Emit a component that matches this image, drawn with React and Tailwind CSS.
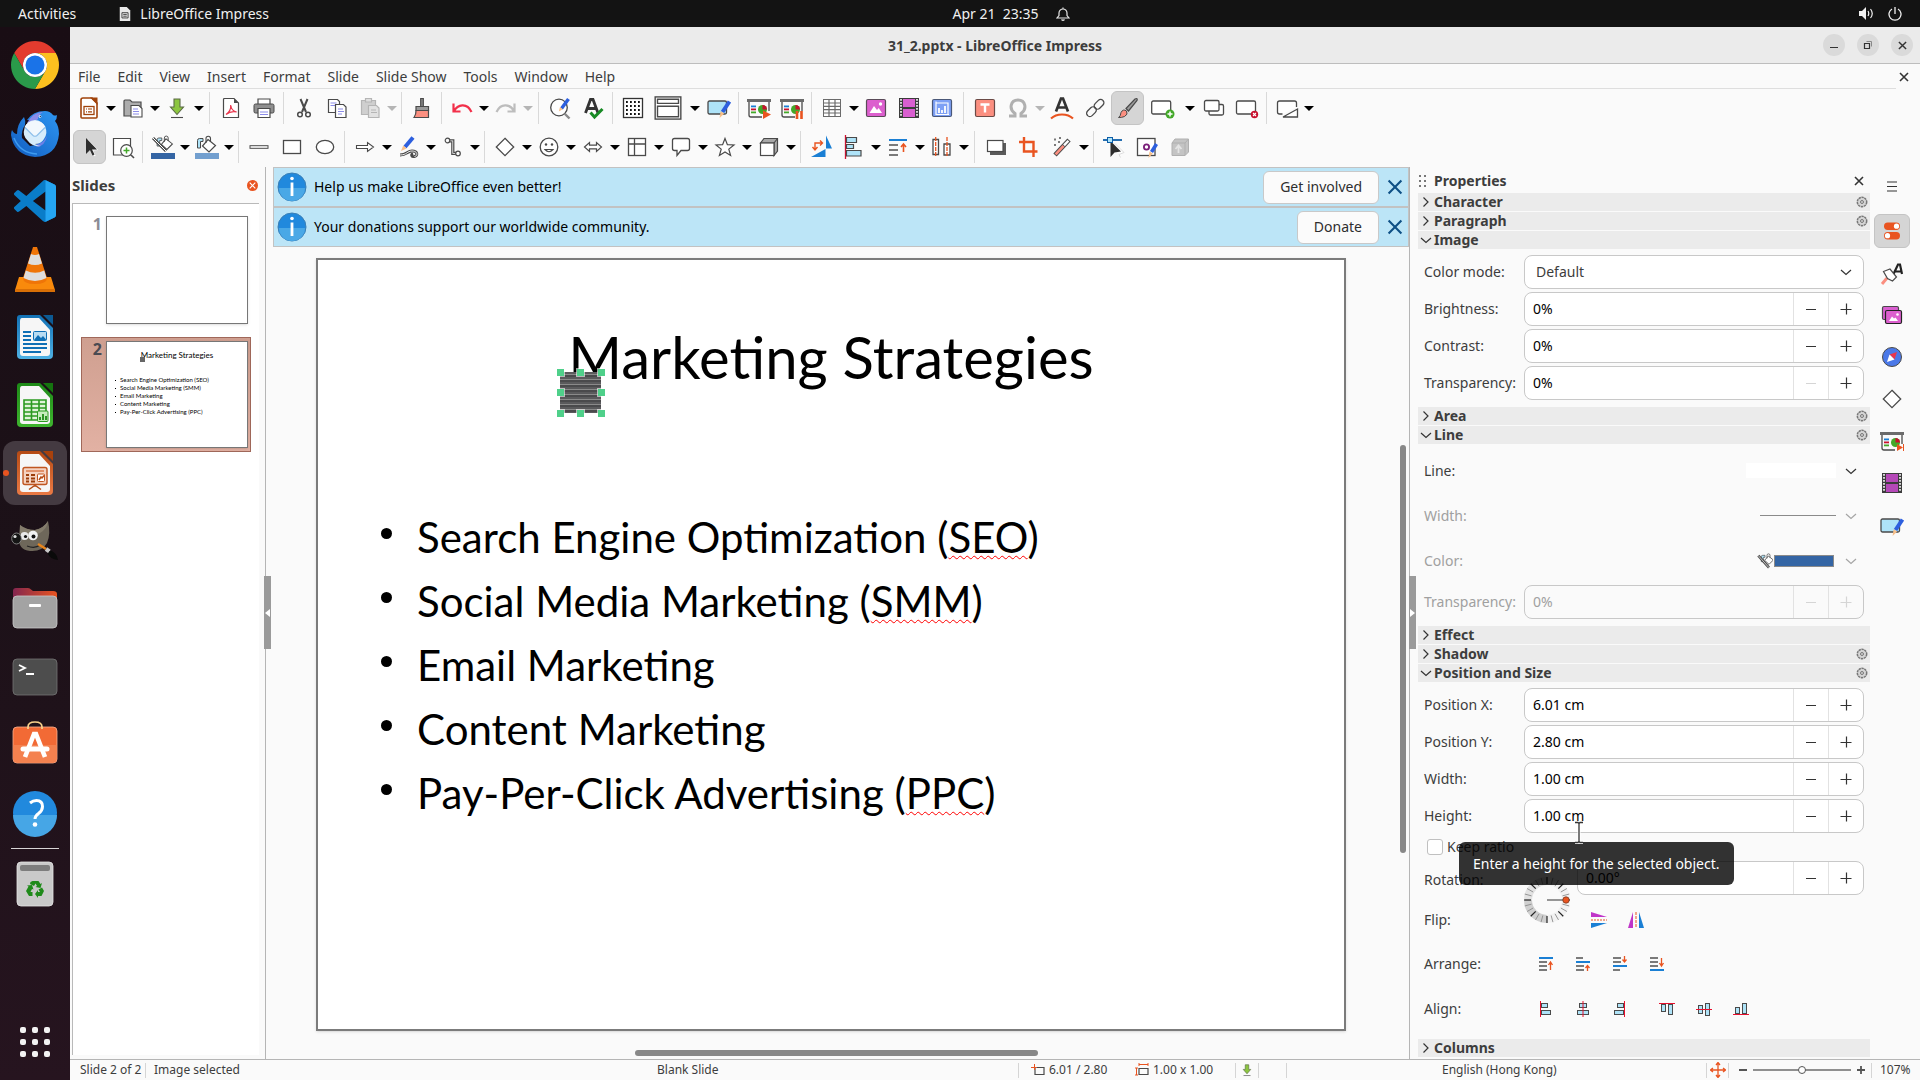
import React from "react";

const K = "#4a4a4a";
const O = "#e95420";

function Svg({ children, size = 24, vb = "0 0 24 24", className = "" }) {
  return (
    <svg width={size} height={size} viewBox={vb} fill="none" className={"shrink-0 " + className} aria-hidden="true">
      {children}
    </svg>
  );
}

/* ---------- toolbar drawings ---------- */

const pencil = (
  <g>
    <path d="M22.5 5.5 15.5 16" stroke="#2d5fde" strokeWidth="4" />
    <path d="m13.6 15.2 3.6 2.4-4.6 4.4z" fill="#f8c08a" />
  </g>
);

const board = (
  <g>
    <path d="M0 3h24v3H0z" fill="#6b6b6b" />
    <path d="M2 6v13q0 2 2 2h11" stroke={K} strokeWidth="1.3" />
    <path d="M22 6v9" stroke={K} strokeWidth="1.3" />
    <path d="M4 9.500h5v1.800H4z" fill="#1a7fd4" />
    <path d="M4 12.500h5v1.800H4z" fill="#c8102e" />
    <path d="M4 15.500h5v1.800H4z" fill="#43a829" />
    <circle cx="15.500" cy="13.500" r="4.500" fill="#43a829" />
    <path d="M15.500 13.500V9a4.500 4.500 0 0 1 4.500 4.500z" fill="#c8102e" />
  </g>
);

const whiteboard = (
  <g>
    <rect x="1" y="5" width="18.500" height="13" rx="1.500" fill="#aee3f8" stroke={K} strokeWidth="1.300" />
    {pencil}
  </g>
);

const film = (fill) => (
  <g>
    <path d="M2 2h20v20H2z" fill="#3c3c3c" />
    <path d="M6 3h12v8H6zM6 13h12v8H6z" fill={fill} />
    <path d="M4 3v18M20 3v18" stroke="#fff" strokeWidth="1.600" strokeDasharray="1.700 1.300" />
  </g>
);

const bucket = (
  <g>
    <path d="M2.500 13V5.500q0-2 2-2H8v3H5.500V13z" fill="#aee3f8" stroke={K} />
    <path d="m13 4.500 7.500 6-6.500 6.500-6.500-6z" fill="#fff" stroke={K} strokeWidth="1.200" />
    <path d="M11 8V3.500a2 2 0 0 1 4.500 0V7" stroke={K} strokeWidth="1.100" />
  </g>
);

const I = {
  new: (
    <g>
      <path d="M6 2h9l5 5v14q0 1-1 1H5q-1 0-1-1V4q0-2 2-2z" fill="#fff" stroke="#a0430b" strokeWidth="1.600" />
      <path d="M13 1.500h7.500V9z" fill="#a0430b" />
      <rect x="7" y="10.500" width="10" height="8" stroke="#a0430b" strokeWidth="1.300" />
      <path d="M9 13h1m1 0h4M9 15.800h1m1 0h4" stroke="#a0430b" strokeWidth="1.200" />
    </g>
  ),
  open: (
    <g>
      <path d="M3 20V5q0-1 1-1h5l2 2h9v14z" fill="#adadad" stroke={K} strokeWidth="1.200" />
      <path d="M10 9.500h8l3 3V21H10z" fill="#fff" stroke={K} strokeWidth="1.100" />
      <path d="M12 13h5m-5 2.500h6m-6 2.500h6" stroke="#8b8be8" strokeWidth="1.200" />
    </g>
  ),
  save: (
    <g>
      <path d="M9 3h6v8h3.500L12 18.500 5.500 11H9z" fill="#8cc63f" stroke="#5b6b45" strokeWidth="1.100" />
      <path d="M6 21.500h12" stroke={K} strokeWidth="1.100" />
    </g>
  ),
  pdf: (
    <g>
      <path d="M5.500 2.500H15l4.500 4.500v14.500h-15v-18q0-1 1-1z" fill="#fff" stroke={K} strokeWidth="1.200" />
      <path d="M15 2.500v4.500h4.500z" fill={K} />
      <path d="M7 18.500c3-2 5-6 4.700-9.500.6 4.500 2.500 6.500 6 7-4-1-7.500 0-10.700 2.500z" stroke="#e8364d" strokeWidth="1.200" />
    </g>
  ),
  print: (
    <g>
      <path d="M6 8V3h12v5" fill="#fff" stroke={K} strokeWidth="1.200" />
      <rect x="2" y="8" width="20" height="9" rx="1.500" fill="#8f8f8f" stroke={K} />
      <path d="M6 12.500h12v9H6z" fill="#fff" stroke={K} strokeWidth="1.200" />
      <path d="M8 16h8m-8 2.500h8" stroke="#8b8be8" strokeWidth="1.200" />
    </g>
  ),
  cut: (
    <g stroke={K} strokeWidth="1.500">
      <path d="m8.500 3 5.500 13M15.500 3 10 16" strokeWidth="2" />
      <circle cx="8" cy="18.500" r="2.300" fill="#fff" />
      <circle cx="16" cy="18.500" r="2.300" fill="#fff" />
    </g>
  ),
  copy: (
    <g stroke={K} strokeWidth="1.200">
      <path d="M3.500 3.500h9l2 2v11h-11z" fill="#fff" />
      <path d="M5.500 7h6m-6 2.500h6" stroke="#8b8be8" />
      <path d="M10.500 8.500h8l2.500 2.500v10.500H10.500z" fill="#fff" />
      <path d="M13 13h5m-5 2.500h6m-6 2.500h4" stroke="#8b8be8" />
    </g>
  ),
  paste: (
    <g stroke="#b5b5b5" strokeWidth="1.200">
      <path d="M3.500 4.500h14v14h-14z" fill="#cfcfcf" />
      <path d="M7.500 2.500h6v3.500h-6z" fill="#dedede" />
      <path d="M10.500 9.500h8l2.500 2.500v9.500H10.500z" fill="#e2e2e2" />
      <path d="M13 14h5m-5 2.500h6" />
    </g>
  ),
  brush: (
    <g stroke={K} strokeWidth="1.200">
      <path d="M10.700 2.500h2.600v8h-2.600z" fill="#8a8a8a" />
      <path d="M6 10.500h12.500v4H6z" fill="#9a9a9a" />
      <path d="M6 14.500h12.500V21.500H4q2.200-3 2-7z" fill="#fb8f80" />
    </g>
  ),
  undo: <path d="M4 15C7.500 8.500 17 6 21.500 16M3.500 7.500V15.500h7" stroke="#f2304a" strokeWidth="2.200" />,
  redo: <path d="M20 15C16.500 8.500 7 6 2.500 16M20.500 7.500V15.500h-7" stroke="#bdbdbd" strokeWidth="2.200" />,
  find: (
    <g>
      <circle cx="11" cy="11.500" r="8.300" fill="#fff" stroke={K} strokeWidth="1.300" />
      <path d="m16.500 17.500 5 5" stroke="#8a8a8a" strokeWidth="2.400" />
      <path d="m20.500 3-7 9.500" stroke="#2d5fde" strokeWidth="3.400" />
      <path d="m12 11 2.800 2.200-4 2.300z" fill="#f8c08a" />
    </g>
  ),
  spell: (
    <g>
      <path d="M4.500 17 9.500 3.500h2.500L17 17M6.500 12.500h8" stroke="#333" strokeWidth="2.800" />
      <path d="m9.500 16.500 4 4.500 8-8" stroke="#178a24" strokeWidth="3" />
    </g>
  ),
  grid: (
    <g>
      <rect x="2.500" y="2.500" width="19" height="19" fill="#fff" stroke="#333" strokeWidth="1.300" />
      <path d="M5 6h15M5 10h15M5 14h15M5 18h15" stroke="#111" strokeWidth="1.800" strokeDasharray="1.800 2.200" />
    </g>
  ),
  display: (
    <g stroke={K} strokeWidth="1.200">
      <rect x="1" y="2.500" width="22" height="19" fill="#fff" />
      <path d="M3 4.500h18v3.500H3zM3 10.500h18v9H3z" />
    </g>
  ),
  whiteboard,
  present: (
    <g>
      {board}
      <path d="m16 14.500 8 4-8 4.500z" fill={O} />
    </g>
  ),
  presentPause: (
    <g>
      {board}
      <path d="M17 15v8M21.500 15v8" stroke={O} strokeWidth="2.600" />
    </g>
  ),
  table: (
    <g>
      <rect x="3.500" y="3.500" width="17" height="17" fill="#fff" stroke="#6b6b6b" />
      <path d="M3.500 7h17M3.500 10.300h17M3.500 13.700h17M3.500 17h17M9 3.500v17M15 3.500v17" stroke="#6b6b6b" strokeWidth="1.200" />
    </g>
  ),
  image: (
    <g>
      <rect x="2.500" y="3.500" width="19" height="17" rx="1.500" fill="#dc5fce" stroke="#5a4a58" strokeWidth="1.200" />
      <path d="m5.500 17 4.500-7 3 4 1.700-2 3.300 5z" fill="#fff" />
      <circle cx="16.500" cy="8" r="1.700" fill="#fff" />
    </g>
  ),
  film: film("#d95fd0"),
  chart: (
    <g>
      <rect x="2.500" y="3.500" width="19" height="17" rx="1.500" fill="#7da0f5" stroke="#4a5878" strokeWidth="1.200" />
      <path d="M6 5.500v13h13M6 7h12v11" stroke="#fff" strokeWidth="1.200" />
      <path d="M9 17v-5m3 5v-3m3 3V10" stroke="#fff" strokeWidth="1.800" />
    </g>
  ),
  textbox: (
    <g>
      <rect x="2.500" y="3.500" width="19" height="17" rx="1.500" fill="#fb8f80" stroke="#6b4a46" strokeWidth="1.200" />
      <path d="M7.500 8.500h9M12 8.500v8" stroke="#fff" strokeWidth="2.400" />
    </g>
  ),
  omega: <path d="M3 20h6v-2.500C2.500 13 4.500 4 12 4s9.500 9 3 13.500V20h6" stroke="#b0b0b0" strokeWidth="3" />,
  fontwork: (
    <g>
      <path d="M6 15.500 11 2.500h2l5 13M8 11.500h8" stroke="#333" strokeWidth="2.700" />
      <path d="M1 22.500c5.500-5.500 16.500-5.500 22 0" stroke={O} strokeWidth="2" />
    </g>
  ),
  link: (
    <g stroke={K} strokeWidth="1.300">
      <rect x="-5" y="-3" width="11" height="6.500" rx="3.200" transform="translate(15.500 8.500) rotate(-45)" />
      <rect x="-6" y="-3.500" width="11" height="6.500" rx="3.200" transform="translate(9 15.500) rotate(-45)" />
    </g>
  ),
  draw: (
    <g>
      <path d="m10 12.500 9-9.500q3-1.500 2 1.500l-8.500 10.500z" fill="#9a9a9a" stroke={K} strokeWidth="1.200" />
      <path d="M2.500 21.500q2-1 2.500-5 2-4 5.500-1.500 2 3.500-2 5.500-3 1.200-6 1z" fill="#fb8f80" stroke={K} />
    </g>
  ),
  newSlide: (
    <g>
      <rect x="0.700" y="5" width="19" height="13" rx="1.500" fill="#fff" stroke={K} strokeWidth="1.300" />
      <circle cx="19" cy="18" r="4.500" fill="#43a829" />
      <path d="M16.500 18h5M19 15.500v5" stroke="#fff" strokeWidth="1.500" />
    </g>
  ),
  dupSlide: (
    <g stroke={K} strokeWidth="1.300">
      <rect x="7" y="8.500" width="14.500" height="10.500" rx="1.500" fill="#fff" />
      <rect x="2.500" y="4.500" width="14.500" height="10.500" rx="1.500" fill="#fff" />
    </g>
  ),
  delSlide: (
    <g>
      <rect x="1.500" y="5" width="19" height="13" rx="1.500" fill="#fff" stroke={K} strokeWidth="1.300" />
      <circle cx="19.500" cy="18.500" r="3.700" fill="#c8102e" />
      <path d="m18 17 3 3m0-3-3 3" stroke="#fff" strokeWidth="1.100" />
    </g>
  ),
  layout: (
    <g stroke={K} strokeWidth="1.300">
      <path d="M21.500 11V7q0-2-2-2h-15q-2 0-2 2v9q0 2 2 2h3" fill="#fff" />
      <path d="M8 21 22.500 13v8z" fill="#fff" />
    </g>
  ),
  select: (
    <g>
      <path d="m9.500 5 9 9.500-4.500.5 3 6" stroke="#fff" strokeWidth="1.500" />
      <path d="M8 3v16l4-4 2.500 5.500 2-1-2.500-5h5z" fill="#2e2e2e" />
    </g>
  ),
  zoom: (
    <g>
      <path d="M2.500 3.500h17V20h-17z" fill="#fff" stroke={K} strokeWidth="1.200" />
      <circle cx="15.500" cy="15.500" r="5.800" fill="#fff" stroke={K} strokeWidth="1.200" />
      <path d="M15.500 12.500v6m-3-3h6" stroke="#43a829" strokeWidth="1.500" />
      <path d="m20 20 3 3" stroke={K} strokeWidth="1.600" />
    </g>
  ),
  lineColor: (
    <g>
      <g transform="translate(4 0) scale(.85)">{bucket}</g>
      <path d="m2 3 13 13" stroke={K} strokeWidth="3" />
      <path d="m2 3 13 13" stroke="#fff" strokeWidth="1" />
      <path d="M0 18h24v6H0z" fill="#3465a4" />
    </g>
  ),
  fillColor: (
    <g>
      {bucket}
      <path d="M0 18h24v6H0z" fill="#729fcf" />
    </g>
  ),
  line: <rect x="3" y="10.700" width="18" height="2.600" fill="#fff" stroke={K} />,
  rect: <rect x="3.500" y="5.500" width="17" height="13" fill="#fff" stroke={K} strokeWidth="1.300" />,
  ellipse: <ellipse cx="12" cy="12" rx="8.700" ry="6.700" fill="#fff" stroke={K} strokeWidth="1.300" />,
  arrow: <path d="M3.500 10.500h11v-3l6 4.500-6 4.500v-3h-11z" fill="#fff" stroke={K} strokeWidth="1.100" />,
  curve: (
    <g>
      <path d="m16 2.500-8 9.500" stroke="#2d5fde" strokeWidth="4" />
      <path d="m6.200 10.500 3.500 3-5.700 2.500z" fill="#f8c08a" />
      <path d="M3 20c7 0 7-4 12-4 6 0 6 5 2.500 5.500-3 .5-4-2-1.500-3" stroke={K} strokeWidth="2.800" />
      <path d="M3 20c7 0 7-4 12-4 6 0 6 5 2.500 5.500" stroke="#fff" strokeWidth=".9" />
    </g>
  ),
  connector: (
    <g stroke={K} strokeWidth="1.200">
      <circle cx="6.500" cy="5.500" r="2.300" />
      <circle cx="17" cy="18.500" r="2.300" />
      <path d="M8.800 4.800h4v12.500h2M8.800 6.800h2v12.500h4" />
    </g>
  ),
  diamond: <path d="m12 3.300 8.700 8.700-8.700 8.700L3.300 12z" fill="#fff" stroke={K} strokeWidth="1.300" />,
  smile: (
    <g>
      <circle cx="12" cy="12" r="8.800" fill="#fff" stroke={K} strokeWidth="1.300" />
      <circle cx="9" cy="9.500" r="1.200" fill={K} />
      <circle cx="15" cy="9.500" r="1.200" fill={K} />
      <path d="M8 14.500h8q-4 4.500-8 0z" stroke={K} strokeWidth="1.200" />
    </g>
  ),
  arrows: <path d="m3.500 12 5-4.500v2.700h7V7.500l5 4.500-5 4.500v-2.700h-7v2.700z" fill="#fff" stroke={K} strokeWidth="1.200" />,
  flow: (
    <g stroke={K} strokeWidth="1.300">
      <rect x="3.500" y="3.500" width="17" height="17" fill="#fff" />
      <path d="M3.500 9h17M9.500 3.500v17" />
    </g>
  ),
  callout: <path d="M5.500 3.500h13q2 0 2 2v8q0 2-2 2h-6.500L8 20.500v-5H5.500q-2 0-2-2v-8q0-2 2-2z" fill="#fff" stroke={K} strokeWidth="1.300" />,
  star: <path d="m12 3.500 2.400 6.200 6.600.3-5.200 4.100 1.800 6.400L12 16.900l-5.600 3.600 1.800-6.400L3 10l6.600-.3z" fill="#fff" stroke={K} strokeWidth="1.200" />,
  cube: (
    <g stroke={K} strokeWidth="1.200">
      <path d="m3.500 8 3.500-4.500h13.500V16L17 20.500V8z" fill="#a8a8a8" />
      <rect x="3.500" y="8" width="13.500" height="12.500" fill="#fff" />
      <path d="m17 8 3.500-4.500" />
    </g>
  ),
  rotate: (
    <g>
      <path d="M17 .5v13h6z" fill="#1a7fd4" />
      <path d="M2 22h14.500v-8z" fill="#1a7fd4" />
      <path d="M6 14V8h7M3.500 12 6 15l2.500-3M11 5.500 13.500 8 11 10.500" stroke={O} strokeWidth="1.400" />
    </g>
  ),
  align: (
    <g>
      <path d="M3.500 0v24" stroke="#d01030" strokeWidth="1.300" />
      <path d="M4.500 2.500h10v5h-10zM4.500 9.500h7v4h-7zM4.500 15.500h14.500v5.500H4.500z" fill="#aee3f8" stroke={K} strokeWidth="1.200" />
    </g>
  ),
  arrange: (
    <g>
      <path d="M3 5h18" stroke="#1a7fd4" strokeWidth="2" />
      <path d="M3 10h9M3 15h9M3 20h9" stroke="#7a7a7a" strokeWidth="1.900" />
      <path d="M17.500 17V9m-2.500 3 2.500-3 2.500 3" stroke={O} strokeWidth="1.600" />
    </g>
  ),
  distribute: (
    <g>
      <path d="M3 4.500h5.500v15H3zM14 9h6v11h-6z" stroke={K} strokeWidth="1.300" fill="#fff" />
      <path d="M5.700 2v20M17 2v20" stroke={O} strokeWidth="1.300" strokeDasharray="4 1" />
    </g>
  ),
  shadow: (
    <g>
      <path d="M6 8h16v12H6z" fill="#5a5a5a" />
      <rect x="3.500" y="5.500" width="15.500" height="11" fill="#fff" stroke={K} strokeWidth="1.200" />
    </g>
  ),
  crop: <path d="M2 7h14.500v15M7 2v14.500h13.500M7 7H2" stroke={O} strokeWidth="2.400" />,
  wand: (
    <g>
      <path d="m5 20 14-15" stroke={K} strokeWidth="4.600" />
      <path d="m5.600 19.300 8-8.500" stroke="#fb8f80" strokeWidth="2.600" />
      <path d="m14 10.400 4.400-4.700" stroke="#fff" strokeWidth="2.400" />
      <path d="M4 4.500h2M8 7h2M4 10h2M9 3h2" stroke="#7a7a7a" strokeWidth="2" />
    </g>
  ),
  points: (
    <g>
      <path d="M1 5h19" stroke="#0d5ea8" strokeWidth="1.800" />
      <path d="m13 8.500 9 9-5 2 1.500 3" fill="#fff" stroke="#ddd" />
      <path d="M8.500 6v16l4-4.500 6.500-1z" fill="#2e2e2e" />
      <rect x="5.500" y="2.500" width="5" height="5" fill="#aee3f8" stroke="#0d5ea8" />
    </g>
  ),
  glue: (
    <g>
      <rect x="2.500" y="3.500" width="17.500" height="17" fill="#fff" stroke={K} strokeWidth="1.300" />
      <circle cx="11.500" cy="12" r="2.600" stroke="#7b1f7a" strokeWidth="1.800" />
      <path d="m21.500 9-5 8" stroke="#2d5fde" strokeWidth="3.600" />
      <path d="m14.500 16.500 3.300 2-4.300 4.500z" fill="#f8c08a" />
    </g>
  ),
  extrude: (
    <g stroke="#b0b0b0">
      <path d="m4 8 3-4h13.500v13L17 20.500H4z" fill="#c4c4c4" />
      <path d="M4 8h13v12.500M17 8l3.500-4" />
      <path d="M10.500 18v-7m-3 3 3-3.500 3 3.500" stroke="#e4e4e4" strokeWidth="1.800" />
    </g>
  ),
};

function Caret({ muted }) {
  return <span className={"block border-x-[5px] border-t-[5px] border-x-transparent " + (muted ? "border-t-[#b5b5b5]" : "border-t-black")} />;
}

const ROW1 = [
  ["new", "c"], ["open", "c"], ["save", "c"], "L", ["pdf"], ["print"], "S", ["cut"], ["copy"], ["paste", "m"], "M", ["brush"], "S",
  ["undo", "c"], ["redo", "m"], "L", ["find"], ["spell"], "S", ["grid"], ["display", "w"], ["whiteboard"], "S", ["present"],
  ["presentPause"], "S", ["table", "c"], ["image"], ["film"], ["chart"], "L", ["textbox"], ["omega", "m"], ["fontwork"], ["link"],
  ["draw", "a"], ["newSlide", "w"], ["dupSlide"], ["delSlide"], "S", ["layout", "c"],
];
const ROW2 = [
  ["select", "a"], ["zoom"], "S", ["lineColor", "c"], ["fillColor", "c"], "M", ["line"], ["rect"], ["ellipse"], "S", ["arrow", "c"],
  ["curve", "c"], ["connector", "c"], "M", ["diamond", "c"], ["smile", "c"], ["arrows", "c"], ["flow", "c"], ["callout", "c"],
  ["star", "c"], ["cube", "c"], "M", ["rotate"], ["align", "c"], ["arrange", "c"], ["distribute", "c"], "L", ["shadow"], ["crop"],
  ["wand", "c"], "M", ["points"], ["glue"], ["extrude"],
];

const SEP = { S: "w-[7px]", M: "w-2", L: "w-2.5" };

function Toolbar({ items, label }) {
  return (
    <div role="toolbar" aria-label={label} className="flex h-[39px] items-center">
      {items.map((it, i) => {
        if (typeof it === "string")
          return (
            <span key={i} className={"flex h-8 justify-center " + SEP[it]}>
              <span className="w-px bg-[#d9d9d9]" />
            </span>
          );
        const [name, kind] = it;
        const wide = kind === "w";
        const active = kind === "a";
        const btn = (
          <button
            key={i}
            type="button"
            aria-label={name}
            className={
              "flex h-[34px] shrink-0 items-center justify-center rounded-md " +
              (wide ? "w-[38px] " : "w-[33px] ") +
              (active ? "border border-[#c4c4c4] bg-[#d5d5d5]" : "")
            }
          >
            <Svg size={name === "display" ? 28 : 24}>{I[name]}</Svg>
          </button>
        );
        if (kind === "c" || kind === "m" || wide)
          return (
            <span key={i} className="flex shrink-0 items-center">
              {btn}
              <button type="button" aria-label={name + " options"} className={"flex h-[34px] items-center justify-center pt-0.5 " + (wide ? "w-[15px]" : "w-[11px]")}>
                <Caret muted={kind === "m"} />
              </button>
            </span>
          );
        return btn;
      })}
    </div>
  );
}

/* ---------- dock ---------- */

function DocIcon({ id, dark, light, mid, children }) {
  return (
    <Svg size={48} vb="0 0 48 48">
      <defs>
        <linearGradient id={id} x1="0" y1="0" x2="0" y2="1">
          <stop offset="0" stopColor={mid} />
          <stop offset="1" stopColor={light} />
        </linearGradient>
      </defs>
      <path d="M9 2h20l13 13v27q0 4-4 4H10q-4 0-4-4V5q0-3 3-3z" fill={`url(#${id})`} />
      <path d="M11 5h17l11 12v23q0 3-3 3H12q-3 0-3-3V8q0-3 2-3z" fill="#f6f6f6" />
      <path d="M32 2h10v10z" fill={dark} />
      {children}
    </Svg>
  );
}

const DOCK = [
  ["Google Chrome", (
    <Svg size={48} vb="0 0 48 48">
      <path d="M24 12h20.780A24 24 0 0 1 24 48L34.400 30A12 12 0 0 0 24 12z" fill="#fcc01f" />
      <path d="M3.220 12A24 24 0 0 1 44.780 12H24A12 12 0 0 0 13.600 30z" fill="#e33b2e" />
      <path d="M24 48A24 24 0 0 1 3.220 12L13.600 30a12 12 0 0 0 20.800 0z" fill="#2a9a4a" />
      <circle cx="24" cy="24" r="12" fill="#fff" />
      <circle cx="24" cy="24" r="9.500" fill="#1a73e8" />
    </Svg>
  )],
  ["Thunderbird", (
    <Svg size={48} vb="0 0 48 48">
      <defs>
        <linearGradient id="tb" x1="1" y1="0" x2="0" y2="1">
          <stop offset="0" stopColor="#2e97f2" />
          <stop offset="1" stopColor="#125cc0" />
        </linearGradient>
      </defs>
      <path d="M1 21q2 4 5 4Q6 15 13 8q2 4 1 8-4 6-3 13l8 8Q31 36 34 22 33 12 26 12l-10-1Q22 2 34 2q5 0 8 4 2 1 4 0 0 4-2 6 4 5 4 13-2 22-24 23Q3 46 0 26q0-3 1-5z" fill="url(#tb)" />
      <path d="M16 14q6-11 16-11-5 3-5 7-3 3-11 4z" fill="#8a8be8" />
      <path d="M3 29Q9 44 26 45" stroke="#3f9cf0" strokeWidth="1.500" />
      <path d="M24 36q8-1 12-9-2 10-10 11z" fill="#6d7fe6" />
      <path d="M24 11a12 12 0 0 1 9 19q-3 5-9 5 3 2 6 2-9 1-13-5A12 12 0 0 1 24 11z" fill="#d6ecfb" />
      <path d="M13.500 18a12 12 0 0 1 21 0l-8.500 8.500q-2 1.500-4 0z" fill="#f2f8fd" />
      <path d="M14 18.500 22 26.500q2 1.500 4 0l8-8" stroke="#8fc0ea" strokeWidth="1.200" />
      <circle cx="29" cy="7.500" r="1.300" fill="#fff" />
      <circle cx="29.300" cy="7.500" r=".7" fill="#12325c" />
    </Svg>
  )],
  ["Visual Studio Code", (
    <Svg size={42}>
      <path d="M23.150 2.587 18.210.210a1.494 1.494 0 0 0-1.705.290l-9.460 8.630-4.120-3.128a.999.999 0 0 0-1.276.057L.327 7.261A1 1 0 0 0 .326 8.740L3.899 12 .326 15.260a1 1 0 0 0 .001 1.479L1.650 17.940a.999.999 0 0 0 1.276.057l4.120-3.128 9.460 8.630a1.492 1.492 0 0 0 1.704.290l4.942-2.377A1.500 1.500 0 0 0 24 20.060V3.939a1.500 1.500 0 0 0-.850-1.352zm-5.146 14.861L10.826 12l7.178-5.448v10.896z" fill="#0a7dc9" />
      <path d="M18.004.150 23.150 2.587A1.500 1.500 0 0 1 24 3.940v16.120a1.500 1.500 0 0 1-.85 1.350l-5.146 2.440z" fill="#25a5f2" />
    </Svg>
  )],
  ["VLC media player", (
    <Svg size={48} vb="0 0 48 48">
      <path d="M8 32h32l4 13H4z" fill="#f98a0c" />
      <path d="M4 44h40v3H4z" fill="#d96f06" />
      <path d="M22 2h4l10 31q0 6-12 6t-12-6z" fill="#ef7508" />
      <path d="m20 9-3 9.500q7 3 14 0L28 9q-4 2-8 0zM14.800 25.500 12.500 33q11.500 6 23 0l-2.300-7.500q-9 4.500-18.400 0z" fill="#dedede" />
    </Svg>
  )],
  ["LibreOffice Writer", (
    <DocIcon id="gw" dark="#0c5a94" mid="#1271b5" light="#4fb1e4">
      <path d="M12 19h8m-8 4h8m-8 4h8m-8 4h24m-24 4h24m-24 4h18" stroke="#0f6fb5" strokeWidth="2" />
      <rect x="22.500" y="18.500" width="13" height="9" rx="1" fill="#b9dcf2" stroke="#0f6fb5" />
      <path d="m23 27 4-5 3 3 2-2 3.500 4z" fill="#0f6fb5" />
    </DocIcon>
  )],
  ["LibreOffice Calc", (
    <DocIcon id="gc" dark="#15740f" mid="#1d8a17" light="#3fb52f">
      <rect x="13" y="19" width="22" height="20" fill="#dff3d8" />
      <path d="M13 19h22v20H13zM13 23h22M13 27h22M13 31h22M13 35h22M20.500 19v20M28 19v20" stroke="#2b9a20" strokeWidth="1.600" />
      <rect x="26.500" y="30" width="10.500" height="10.500" rx="1" fill="#c7ecbd" stroke="#2b9a20" />
      <path d="M29 39v-3m3 3v-6m3 6v-4" stroke="#1d8a17" strokeWidth="1.800" />
    </DocIcon>
  )],
  ["LibreOffice Impress", (
    <DocIcon id="gi" dark="#a8410c" mid="#b54a14" light="#ea7a45">
      <rect x="12" y="18.500" width="24" height="17" rx="2" fill="#f5d3c2" stroke="#c05621" strokeWidth="1.400" />
      <path d="M15 22h18" stroke="#e08a60" strokeWidth="1.800" />
      <path d="M15 26h3m-3 3.500h3m-3 3h3m2-6.500h4m-4 3.500h4m-4 3h4" stroke="#9c3d0a" strokeWidth="2" />
      <rect x="26.500" y="25" width="7" height="7.500" rx="1" fill="#fff" stroke="#c05621" />
      <path d="m28 31 2-3 1 1 2-2.500M24 35.500v1.500m-6 3.500 5-3.500h2l5 3.500" stroke="#b54a14" strokeWidth="1.500" />
    </DocIcon>
  )],
  ["GIMP", (
    <Svg size={48} vb="0 0 48 48">
      <path d="M9 8q6 5 15 5 9-2 13-9 3 13-1 22-5 9-17 8Q7 33 8 20z" fill="#6e675a" />
      <path d="M9 8q6 5 15 5 9-2 13-9-1 8-8 12-11 5-20 0z" fill="#847c6c" />
      <circle cx="13.500" cy="19" r="4" fill="#e8e8e8" />
      <circle cx="22" cy="18.500" r="4.800" fill="#f2f2f2" />
      <circle cx="14.500" cy="19.500" r="1.600" fill="#111" />
      <circle cx="22.500" cy="19.500" r="2" fill="#111" />
      <ellipse cx="5.500" cy="21.500" rx="4.800" ry="5.500" fill="#151515" stroke="#9a9a9a" strokeWidth=".8" />
      <circle cx="4" cy="19.500" r="1.600" fill="#ddd" />
      <path d="M16 29q8 3 13-1" stroke="#222" strokeWidth="1.200" />
      <path d="m27 27 8 5" stroke="#e8851c" strokeWidth="2.600" />
      <path d="m35 32 3.500 2.500" stroke="#c9c9c9" strokeWidth="4" />
      <path d="M37 37q1-4 4-3 5 3 6 9-8-1-10-6z" fill="#0a0a0a" />
    </Svg>
  )],
  ["Files", (
    <Svg size={48} vb="0 0 48 48">
      <defs>
        <linearGradient id="fb" x1="0" y1="0" x2="1" y2="0">
          <stop offset="0" stopColor="#83264f" />
          <stop offset="1" stopColor="#e95420" />
        </linearGradient>
      </defs>
      <path d="M2 6q0-3 3-3h12q2 0 3 1.500L22 6h20q4 0 4 3v12H2z" fill="url(#fb)" />
      <rect x="2" y="11" width="44" height="32" rx="4" fill="#a3a3a3" stroke="#c9c9c9" strokeWidth=".8" />
      <rect x="18" y="19" width="12" height="3" rx="1" fill="#fff" />
    </Svg>
  )],
  ["Terminal", (
    <Svg size={48} vb="0 0 48 48">
      <rect x="2" y="6" width="44" height="36" rx="4" fill="#4d4d4d" stroke="#757575" strokeWidth=".8" />
      <path d="m8 12 6 3-6 3m7 3h8" stroke="#fff" strokeWidth="1.800" />
    </Svg>
  )],
  ["Ubuntu Software", (
    <Svg size={48} vb="0 2 48 48">
      <rect x="2" y="8" width="44" height="36" rx="4" fill="#f26a35" stroke="#fbb08e" strokeWidth=".8" />
      <path d="M2.500 26h43v14q0 3.500-4 3.500h-35q-4 0-4-3.500z" fill="#f4814f" />
      <path d="M17 10V8q0-5 7-5t7 5v2" stroke="#f8d28c" strokeWidth="1.700" />
      <path d="M14 38 23 15h2l9 23" stroke="#fff" strokeWidth="4.600" />
      <path d="M12 30h24" stroke="#fff" strokeWidth="5" strokeLinecap="round" />
    </Svg>
  )],
  ["Help", (
    <Svg size={48} vb="0 0 48 48">
      <circle cx="24" cy="24" r="22" fill="#2189dd" />
      <path d="M2 26h44a22 22 0 0 1-44 0z" fill="#46a6e6" />
      <path d="M19 14q3-2.500 6.500-2.500 6 0 6 6 0 4-4 7Q24 27 24 30" stroke="#fff" strokeWidth="3" />
      <circle cx="24" cy="35.500" r="2.300" fill="#fff" />
    </Svg>
  )],
];

function Dock() {
  return (
    <nav aria-label="Dock" className="flex w-[70px] shrink-0 flex-col bg-linear-to-b from-[#190d14] via-[#1c1118] to-[#26141f] pt-1 pb-1">
      {DOCK.map(([name, icon]) => (
        <button key={name} type="button" aria-label={name} className="relative flex h-[68px] items-center justify-center">
          {name === "LibreOffice Impress" && <span className="absolute left-[3px] size-1.5 rounded-full bg-[#e95420]" />}
          <span className={"flex size-16 items-center justify-center rounded-xl " + (name === "LibreOffice Impress" ? "bg-[#443a41]" : "")}>{icon}</span>
        </button>
      ))}
      <span className="mx-[11px] mt-px h-px bg-[#d8d5d6]" />
      <button type="button" aria-label="Trash" className="flex h-[70px] items-center justify-center">
        <Svg size={48} vb="0 0 48 48">
          <rect x="6" y="2" width="36" height="44" rx="4" fill="#c9c9c9" stroke="#e6e6e6" strokeWidth=".8" />
          <rect x="9" y="5" width="30" height="6" rx="2" fill="#7d7d7d" />
          <g fill="#1f8a1a">
            <path d="m19.500 22 2-1h6l2 3 1.500-1-1.500 5-5-1 1.500-1-1.500-2.500-1.500 2.500-4-2z" />
            <path d="m15 31 2.500-4.500-1.500-1 5-.5 1.500 4.500-1.500-.5-1.500 3h2v4H18z" />
            <path d="m33 31-2-3.500-3.500 2 1.500 2.500h-2v-2l-3 4 3 4v-2h3.500z" />
          </g>
        </Svg>
      </button>
      <button type="button" aria-label="Show Applications" className="mt-auto flex h-[68px] items-center justify-center">
        <span className="grid grid-cols-3 gap-1.5">
          {Array.from({ length: 9 }, (_, i) => (
            <span key={i} className="size-1.5 rounded-[2px] bg-[#f2f2f2]" />
          ))}
        </span>
      </button>
    </nav>
  );
}

/* ---------- small shared pieces ---------- */

function Cross({ size = 10, color = "#333", w = 1.6 }) {
  return (
    <Svg size={size} vb="0 0 10 10">
      <path d="m1 1 8 8m0-8-8 8" stroke={color} strokeWidth={w} />
    </Svg>
  );
}

function Chevron({ open, muted }) {
  return (
    <Svg size={12} vb="0 0 12 12">
      <path d={open ? "m1 4 5 4.500L11 4" : "m3.500 1.500 4.500 4.500-4.500 4.500"} stroke={muted ? "#a5a5a5" : "#333"} strokeWidth="1.200" />
    </Svg>
  );
}

function InfoBar({ text, action }) {
  return (
    <div className="flex h-10 items-center border border-[#c2c2c2] bg-[#bce5f7] pr-1 pl-[3px]">
      <Svg size={30} vb="0 0 30 30">
        <circle cx="15" cy="15" r="14" fill="#2189dd" stroke="#3c7fb5" />
        <path d="M2 16h26a13 13 0 0 1-26 0z" fill="#4aa8e6" />
        <circle cx="15" cy="6.500" r="1.800" fill="#fff" />
        <path d="M15 10.500V24" stroke="#fff" strokeWidth="2.800" />
      </Svg>
      <span className="ml-[7px] flex-1 text-black">{text}</span>
      <button type="button" className="h-[33px] rounded-md border border-[#c9c9c9] bg-[#fbfbfb] px-4 text-[#2e2e2e]">{action}</button>
      <button type="button" aria-label="Close" className="ml-[7px] p-px">
        <Cross size={16} color="#0d4f85" w={1.3} />
      </button>
    </div>
  );
}

const BULLETS = [
  ["Search Engine Optimization (", "SEO", ")"],
  ["Social Media Marketing (", "SMM", ")"],
  ["Email Marketing"],
  ["Content Marketing"],
  ["Pay-Per-Click Advertising (", "PPC", ")"],
];

/* ---------- slide panel ---------- */

function SlidePanel() {
  return (
    <aside className="flex w-[195px] shrink-0 flex-col pl-0.5">
      <div className="flex h-9 items-center justify-between pr-[7px]">
        <h2 className="text-[15px] font-bold">Slides</h2>
        <button type="button" aria-label="Close" className="flex size-[11px] items-center justify-center rounded-full bg-[#e95420]">
          <Cross size={7} color="#fff" />
        </button>
      </div>
      <div className="mr-1.5 mb-1 flex flex-1 flex-col gap-2 border-t border-l border-[#b9b9b9] bg-white pt-1.5 pl-2">
        <div className="flex h-[119px] w-[170px] border border-transparent pt-[5px]">
          <span className="w-6 pr-1 text-right text-base leading-4 font-bold text-[#8b8b95]">1</span>
          <div className="h-[108px] w-[142px] border border-[#777] bg-white shadow" />
        </div>
        <div className="flex h-[115px] w-[170px] border border-[#a0685a] bg-linear-to-b from-[#cf9f90] to-[#e2b1a3] pt-[3px]">
          <span className="w-6 pr-1 text-right text-base leading-4 font-bold text-[#4a4a52]">2</span>
          <div className="relative h-[107px] w-[142px] border border-[#777] bg-white font-['Lato',sans-serif] text-black shadow">
            <p className="pt-2 text-center text-[8px] leading-[11px]">Marketing Strategies</p>
            <span className="absolute top-[15px] left-[33px] size-[5px] bg-[#666]" />
            <ul className="mt-[15px] ml-2 text-[6px]">
              {BULLETS.map((b) => (
                <li key={b[0]} className="flex h-2 items-center gap-1 leading-2 whitespace-nowrap">
                  <span className="size-px bg-black" />
                  {b.join("")}
                </li>
              ))}
            </ul>
          </div>
        </div>
      </div>
    </aside>
  );
}

/* ---------- editing area ---------- */

const HANDLES = [
  "left-[-3px] top-[-3px]", "left-[17px] top-[-3px]", "left-[38px] top-[-3px]",
  "left-[-3px] top-[17px]", "left-[38px] top-[17px]",
  "left-[-3px] top-[38px]", "left-[17px] top-[38px]", "left-[38px] top-[38px]",
];

function Canvas() {
  return (
    <div className="flex min-h-0 flex-1 flex-col">
      <div className="flex flex-1 pt-[11px]">
        <div className="relative ml-[43px] flex-1 border-2 border-[#7b7b7b] bg-white font-['Lato',sans-serif] text-black shadow">
          <h1 className="pt-[67px] text-center text-[58px] leading-[60px]">Marketing Strategies</h1>
          <div className="absolute top-[112px] left-[242px] size-[41px] bg-[repeating-linear-gradient(#5a5a5c_0px,#5a5a5c_2px,#8a8a8a_2px,#8a8a8a_3px,#4a4a4c_3px,#4a4a4c_5px)]">
            {HANDLES.map((h) => (
              <span key={h} className={"absolute size-[7px] bg-[#4fd08a] outline outline-white/60 " + h} />
            ))}
          </div>
          <ul className="mt-[118px] ml-[62px] text-[42px]">
            {BULLETS.map(([a, b, c]) => (
              <li key={a} className="flex h-16 items-center">
                <span className="mb-2 ml-px size-[11px] rounded-full bg-black" />
                <span className="ml-[25px] leading-[64px] whitespace-nowrap">
                  {a}
                  {b && <span className="underline decoration-[#ff0000] decoration-wavy decoration-1 underline-offset-2">{b}</span>}
                  {c}
                </span>
              </li>
            ))}
          </ul>
        </div>
        <div className="flex w-[63px] flex-col items-end pt-[187px] pr-[3px]">
          <span className="h-[408px] w-[6px] rounded-full bg-[#888]" />
        </div>
      </div>
      <div className="flex h-7 items-end pb-[3px]">
        <span className="ml-[362px] h-[6px] w-[403px] rounded-full bg-[#888]" />
      </div>
    </div>
  );
}

function Splitter({ dir }) {
  return (
    <div className="relative w-2 shrink-0 border-l border-[#b5b5b5]">
      <button type="button" aria-label="Toggle panel" className={"absolute top-[409px] flex h-[73px] w-[7px] items-center justify-center bg-[#9a9a9a] " + (dir === "l" ? "left-[-2px]" : "left-[-1px]")}>
        <span className={"block border-y-4 border-y-transparent " + (dir === "l" ? "border-r-[5px] border-r-white" : "border-l-[5px] border-l-white")} />
      </button>
    </div>
  );
}

/* ---------- properties sidebar ---------- */

function Section({ title, open, gear = true }) {
  return (
    <div className="mb-px flex h-[18px] items-center bg-[#ebebeb] px-0.5">
      <button type="button" aria-expanded={!!open} className="flex flex-1 items-center gap-0.5 text-left leading-[18px] font-bold">
        <Chevron open={open} />
        {title}
      </button>
      {gear && (
        <button type="button" aria-label={title + " options"}>
          <Svg size={12} vb="0 0 12 12">
            <circle cx="6" cy="6" r="4.700" fill="#d5d5d5" stroke="#777" strokeWidth="1.500" strokeDasharray="2.400 .6" />
            <circle cx="6" cy="6" r="1.500" stroke="#777" />
          </Svg>
        </button>
      )}
    </div>
  );
}

function Spin({ id, label, value, disabled, minOff, narrow }) {
  return (
    <div className="mb-[3px] flex h-[34px] items-center px-1.5">
      <label htmlFor={id} className={"shrink-0 whitespace-nowrap " + (narrow ? "w-[153px] pt-1 " : "w-[100px] ") + (disabled ? "text-[#a0a0a0]" : "")}>{label}</label>
      <div className={"flex h-[34px] min-w-0 flex-1 rounded-lg border border-[#c8c8c8] " + (disabled ? "bg-[#fafafa]" : "bg-white")}>
        <input id={id} defaultValue={value} disabled={disabled} className={"min-w-0 flex-1 bg-transparent px-2 outline-none " + (disabled ? "text-[#a0a0a0]" : "text-black")} />
        <button type="button" aria-label={"Decrease " + label} className="flex w-[35px] items-center justify-center border-l border-[#e2e2e2]">
          <span className={"h-px w-2.5 " + (disabled || minOff ? "bg-[#d5d5d5]" : "bg-[#333]")} />
        </button>
        <button type="button" aria-label={"Increase " + label} className="flex w-[35px] items-center justify-center border-l border-[#e2e2e2]">
          <Svg size={12} vb="0 0 12 12">
            <path d="M.5 6.500h11M6.500.5v11" stroke={disabled ? "#d5d5d5" : "#333"} strokeWidth="1.200" />
          </Svg>
        </button>
      </div>
    </div>
  );
}

function LineRow({ label, muted, children }) {
  return (
    <div className={"flex h-[45px] items-center pr-3 pl-1.5 " + (muted ? "text-[#a0a0a0]" : "")}>
      <span className="flex-1">{label}</span>
      {children}
      <button type="button" aria-label={label + " list"} className="p-px">
        <Chevron open muted={muted} />
      </button>
    </div>
  );
}

function IconBtn({ label, children }) {
  return (
    <button type="button" aria-label={label} className="flex size-[37px] items-center justify-center">
      <Svg size={16} vb="0 0 16 16">{children}</Svg>
    </button>
  );
}

const bar = (x, y, w, h) => <rect x={x} y={y} width={w} height={h} fill="#aee3f8" stroke={K} />;

function Dial() {
  const ticks = Array.from({ length: 24 }, (_, i) => i * 15);
  return (
    <Svg size={48} vb="0 0 48 48">
      <circle cx="24" cy="24" r="19" stroke="#f2f2f2" strokeWidth="8" />
      <path d="M5 24A19 19 0 0 0 24 43" stroke="#cfcfcf" strokeWidth="8" />
      <path d="M5 24A19 19 0 0 1 24 5" stroke="#e2e2e2" strokeWidth="8" />
      {ticks.map((t) => (
        <path key={t} d="M40 24h7" stroke={t % 45 === 0 ? "#222" : "#8a8a8a"} strokeWidth={t % 45 === 0 ? 1.2 : 0.8} transform={`rotate(${t} 24 24)`} />
      ))}
      <path d="M24 24h19" stroke="#333" />
      <circle cx="43" cy="24" r="3.200" fill={O} stroke="#7a3a20" strokeWidth=".8" />
    </Svg>
  );
}

function Properties() {
  return (
    <aside className="relative flex w-[453px] shrink-0 flex-col pl-px">
      <div className="flex h-[26px] items-center pt-0.5 pr-[5px] pl-px">
        <span className="mr-2 grid grid-cols-2 gap-[3px]">
          {Array.from({ length: 6 }, (_, i) => (
            <span key={i} className="size-[2px] bg-[#777]" />
          ))}
        </span>
        <h2 className="flex-1 font-bold">Properties</h2>
        <button type="button" aria-label="Close" className="p-px"><Cross /></button>
      </div>
      <Section title="Character" />
      <Section title="Paragraph" />
      <Section title="Image" open gear={false} />
      <div className="mt-[5px] mb-[3px] flex h-[34px] items-center px-1.5">
        <label htmlFor="mode" className="w-[100px] shrink-0">Color mode:</label>
        <div className="relative flex-1">
          <select id="mode" className="h-[34px] w-full appearance-none rounded-lg border border-[#c8c8c8] bg-white px-[11px]">
            <option>Default</option>
          </select>
          <span className="pointer-events-none absolute top-[11px] right-3"><Chevron open /></span>
        </div>
      </div>
      <Spin id="bri" label="Brightness:" value="0%" />
      <Spin id="con" label="Contrast:" value="0%" />
      <Spin id="tra" label="Transparency:" value="0%" minOff />
      <div className="h-1" />
      <Section title="Area" />
      <Section title="Line" open />
      <div className="pt-[3px]">
        <LineRow label="Line:"><span className="mr-2 h-[15px] w-[90px] bg-white" /></LineRow>
        <LineRow label="Width:" muted><span className="mr-2 h-px w-[76px] bg-[#8a8a8a]" /></LineRow>
        <LineRow label="Color:" muted>
          <Svg size={16}>
            <g transform="translate(4 0)">{bucket}</g>
            <path d="m2 4 16 18" stroke={K} strokeWidth="4" />
            <path d="m2 4 16 18" stroke="#fff" strokeWidth="1" />
          </Svg>
          <span className="mr-2.5 ml-px h-3 w-[60px] border border-[#8a8a8a] bg-[#3465a4]" />
        </LineRow>
        <div className="pt-0.5">
          <Spin id="ltr" label="Transparency:" value="0%" disabled />
        </div>
      </div>
      <div className="h-1" />
      <Section title="Effect" gear={false} />
      <Section title="Shadow" />
      <Section title="Position and Size" open />
      <div className="h-[5px]" />
      <Spin id="px" label="Position X:" value="6.01 cm" />
      <Spin id="py" label="Position Y:" value="2.80 cm" />
      <Spin id="wi" label="Width:" value="1.00 cm" />
      <Spin id="he" label="Height:" value="1.00 cm" />
      <label className="flex h-[25px] items-center gap-1 pb-1 pl-[9px]">
        <input type="checkbox" className="size-4 appearance-none rounded-[3px] border border-[#c0c0c0] bg-white" />
        Keep ratio
      </label>
      <Spin id="ro" label="Rotation:" value="0.00°" narrow />
      <div className="relative flex h-[43px] items-center pl-1.5">
        <span className="absolute top-[-22px] left-[105px]"><Dial /></span>
        <span className="w-[156px]">Flip:</span>
        <IconBtn label="Flip vertically">
          <path d="M0 0v5h16z" fill="#c035c8" />
          <path d="M0 16v-5h16z" fill="#1a7fd4" />
          <path d="M0 8h16" stroke={O} strokeDasharray="2 1" />
        </IconBtn>
        <IconBtn label="Flip horizontally">
          <path d="M0 16h5V0z" fill="#c035c8" />
          <path d="M16 16h-5V0z" fill="#1a7fd4" />
          <path d="M8 0v16" stroke={O} strokeDasharray="3 1" />
        </IconBtn>
      </div>
      <div className="flex h-[45px] items-center pl-1.5">
        <span className="w-[103px]">Arrange:</span>
        <IconBtn label="Bring to front">
          <path d="M1 2h14" stroke="#1a7fd4" strokeWidth="2" />
          <path d="M1 6h8M1 10h8M1 14h8" stroke="#7a7a7a" strokeWidth="2" />
          <path d="M12.500 14V6m-2 3 2-3 2 3" stroke={O} strokeWidth="1.300" />
        </IconBtn>
        <IconBtn label="Forward one">
          <path d="M1 6h14" stroke="#1a7fd4" strokeWidth="2" />
          <path d="M1 2h7M1 10h8M1 14h8" stroke="#7a7a7a" strokeWidth="2" />
          <path d="M12.500 15v-5m-2 2 2-2.500 2 2.500" stroke={O} strokeWidth="1.300" />
        </IconBtn>
        <IconBtn label="Back one">
          <path d="M1 10h14" stroke="#1a7fd4" strokeWidth="2" />
          <path d="M1 2h8M1 6h8M1 14h7" stroke="#7a7a7a" strokeWidth="2" />
          <path d="M12.500 0v6m-2-2.500 2 2.500 2-2.500" stroke={O} strokeWidth="1.300" />
        </IconBtn>
        <IconBtn label="Send to back">
          <path d="M1 14h14" stroke="#1a7fd4" strokeWidth="2" />
          <path d="M1 2h8M1 6h8M1 10h8" stroke="#7a7a7a" strokeWidth="2" />
          <path d="M12.500 2v8m-2-3 2 3 2-3" stroke={O} strokeWidth="1.300" />
        </IconBtn>
      </div>
      <div className="flex h-[45px] items-center pl-1.5">
        <span className="w-[103px]">Align:</span>
        <IconBtn label="Align left">{bar(3.5, 2.5, 6, 4)}{bar(3.5, 9.5, 9, 4)}<path d="M2.500 0v16" stroke="#e8102e" /></IconBtn>
        <IconBtn label="Centre">{bar(4.5, 2.5, 7, 4)}{bar(2.5, 9.5, 11, 4)}<path d="M8 0v16" stroke="#e8102e" /></IconBtn>
        <IconBtn label="Align right">{bar(5.5, 2.5, 6, 4)}{bar(2.5, 9.5, 9, 4)}<path d="M12.500 0v16" stroke="#e8102e" /></IconBtn>
        <span className="w-2.5" />
        <IconBtn label="Align top">{bar(2.5, 3.5, 4, 7)}{bar(9.5, 3.5, 4, 10)}<path d="M0 2.500h16" stroke="#e8102e" /></IconBtn>
        <IconBtn label="Middle">{bar(2.5, 4.5, 4, 8)}{bar(9.5, 2.5, 4, 12)}<path d="M0 8.500h16" stroke="#e8102e" /></IconBtn>
        <IconBtn label="Align bottom">{bar(2.5, 6.5, 4, 6)}{bar(9.5, 2.5, 4, 10)}<path d="M0 13.500h16" stroke="#e8102e" /></IconBtn>
      </div>
      <div className="h-2" />
      <Section title="Columns" gear={false} />
      <div className="absolute top-[675px] left-[42px] flex h-[43px] items-center rounded-md bg-black/80 px-[14px] whitespace-nowrap text-white" role="tooltip">
        Enter a height for the selected object.
      </div>
      <svg className="absolute top-[654px] left-[157px]" width="10" height="23" viewBox="0 0 10 23" fill="none" aria-hidden="true">
        <path d="M1 1.500h3l1 1 1-1h3M5 2v19M1 21.500h3l1-1 1 1h3" stroke="#fff" strokeWidth="3" />
        <path d="M1 1.500h3l1 1 1-1h3M5 2v19M1 21.500h3l1-1 1 1h3" stroke="#333" strokeWidth="1.300" />
      </svg>
    </aside>
  );
}

const TABS = [
  ["Properties", "h-[45px]", (
    <g>
      <rect x="4" y="3.500" width="16" height="7.500" rx="3.700" fill={O} />
      <circle cx="16.500" cy="7.200" r="2.600" fill="#fff" />
      <rect x="4" y="13" width="16" height="7.500" rx="3.700" fill={O} />
      <circle cx="7.500" cy="16.700" r="2.600" fill="#fff" />
    </g>
  )],
  ["Styles", "h-[41px]", (
    <g>
      <path d="M13.500 12 18 2.500h2L22 12M15 9.500h7" stroke="#222" strokeWidth="2.200" />
      <path d="m2 22 5-6" stroke="#fb8f80" strokeWidth="3" />
      <path d="M3.500 9.500 10 7l6.500 8-4 4-5-2.500z" fill="#fff" stroke={K} strokeWidth="1.200" />
    </g>
  )],
  ["Gallery", "h-[42px]", (
    <g>
      <rect x="2.500" y="3.500" width="16" height="13" rx="1.500" fill="#d95fd0" stroke={K} strokeWidth="1.200" />
      <rect x="5.500" y="7.500" width="16" height="13" rx="1.500" fill="#dc5fce" stroke="#222" strokeWidth="1.200" />
      <path d="m9 18 3-4.500 2 2 1.500-1 2.500 3.500z" fill="#fff" />
      <circle cx="17.500" cy="11.500" r="1.300" fill="#fff" />
    </g>
  )],
  ["Navigator", "h-[42px]", (
    <g>
      <circle cx="12" cy="12" r="9.500" fill="#4a78e8" stroke={K} />
      <path d="m17 7-2.500 7.500L9.500 9.500z" fill="#e8364d" />
      <path d="m7 17 2.500-7.500 5 5z" fill="#fff" />
    </g>
  )],
  ["Shapes", "h-[42px]", I.diamond],
  ["Slide transition", "h-[42px]", (
    <g>
      {board}
      <path d="m17 15 6 3.500-6 3.500z" fill={O} />
      <path d="M23.500 15v7" stroke={O} />
    </g>
  )],
  ["Animation", "h-[42px]", film("#b548b8")],
  ["Master slides", "h-[44px]", whiteboard],
];

function TabBar() {
  return (
    <div className="flex w-[50px] shrink-0 flex-col items-center pr-[6px]">
      <button type="button" aria-label="Sidebar settings" className="flex h-[41px] items-center pb-1">
        <Svg size={12} vb="0 0 12 12"><path d="M1 2h10M1 6.500h10M1 11h10" stroke="#333" strokeWidth="1.200" /></Svg>
      </button>
      {TABS.map(([name, h, icon], i) => (
        <button key={name} type="button" aria-label={name} className={"flex items-center " + h}>
          <span className={"flex h-[34px] w-9 items-center justify-center rounded-md " + (i === 0 ? "border border-[#c4c4c4] bg-[#d5d5d5]" : "")}>
            <Svg>{icon}</Svg>
          </span>
        </button>
      ))}
    </div>
  );
}

const Vr = () => <span className="h-[15px] w-px shrink-0 bg-[#d5d5d5]" />;

function StatusBar() {
  return (
    <footer className="flex h-[21px] shrink-0 items-center border-t border-[#b5b5b5] px-2.5 text-[12px]">
      <span className="w-[65px] whitespace-nowrap">Slide 2 of 2</span>
      <Vr />
      <span className="w-[511px] pl-2">Image selected</span>
      <span className="w-[361px]">Blank Slide</span>
      <Vr />
      <span className="flex w-[108px] items-center gap-1 pl-3">
        <Svg size={14} vb="0 0 14 14"><path d="M4 4.500h9v7H4z" stroke={K} strokeWidth="1.200" /><path d="M0 4.500h6M3.500 1v6" stroke={O} /></Svg>
        6.01 / 2.80
      </span>
      <span className="flex w-[108px] items-center gap-1 pl-2">
        <Svg size={14} vb="0 0 14 14"><path d="M4 5.500h9v6H4z" stroke={K} strokeWidth="1.200" /><path d="M4 1.500h9M4 0v3M13 0v3M1.500 5v7M0 5h3M0 12h3" stroke={O} /></Svg>
        1.00 x 1.00
      </span>
      <Vr />
      <span className="flex w-[22px] justify-center"><Svg size={14}>{I.save}</Svg></span>
      <Vr />
      <span className="w-[27px]" />
      <Vr />
      <span className="flex-1 pl-[155px]">English (Hong Kong)</span>
      <Vr />
      <span className="flex w-[21px] justify-center">
        <Svg size={16} vb="0 0 16 16">
          <path d="M8 1v14M1 8h14M6 3l2-2.500L10 3M6 13l2 2.500 2-2.500M3 6 .5 8 3 10M13 6l2.500 2-2.500 2" stroke={O} strokeWidth="1.300" />
        </Svg>
      </span>
      <Vr />
      <button type="button" aria-label="Zoom out" className="flex w-6 justify-center"><span className="ml-1 h-0.5 w-2 bg-[#555]" /></button>
      <input
        type="range"
        aria-label="Zoom"
        className="h-2 w-[98px] appearance-none bg-[linear-gradient(#8f8f8f,#8f8f8f)] bg-[length:100%_2px] bg-center bg-no-repeat [&::-webkit-slider-thumb]:size-2 [&::-webkit-slider-thumb]:appearance-none [&::-webkit-slider-thumb]:rounded-full [&::-webkit-slider-thumb]:border [&::-webkit-slider-thumb]:border-[#555] [&::-webkit-slider-thumb]:bg-white"
      />
      <button type="button" aria-label="Zoom in" className="flex w-5 justify-center">
        <Svg size={8} vb="0 0 8 8"><path d="M0 4h8M4 0v8" stroke="#555" strokeWidth="1.800" /></Svg>
      </button>
      <Vr />
      <span className="w-[38px] pl-2">107%</span>
    </footer>
  );
}

const MENUS = ["File", "Edit", "View", "Insert", "Format", "Slide", "Slide Show", "Tools", "Window", "Help"];

export default function App() {
  return (
    <div className="flex h-screen flex-col overflow-hidden bg-[#fafafa] font-['Noto_Sans',sans-serif] text-[14px] leading-5 text-[#3d3d3d]">
      <header className="relative flex h-[27px] shrink-0 items-center bg-[#131313] text-[#f0f0f0]">
        <button type="button" className="pl-[18px]">Activities</button>
        <button type="button" className="ml-[42px] flex items-center gap-2">
          <Svg size={14} vb="0 0 14 16">
            <path d="M1 0h8l4 4v12H1z" fill="#e8e8e8" />
            <path d="M3.500 6.500h7v6h-7zM5 8.500h4M5 10.500h4" stroke="#333" />
          </Svg>
          LibreOffice Impress
        </button>
        <div className="absolute inset-x-0 flex items-center justify-center gap-[17px] pl-[102px]">
          <span>Apr 21&nbsp; 23:35</span>
          <Svg size={14} vb="0 0 14 14">
            <path d="M1 11h12l-2-2.500V6a4 4 0 0 0-8 0v2.500zM5.500 12.500q1.500 1.500 3 0M7 2V.5" stroke="#e8e8e8" strokeWidth="1.200" />
          </Svg>
        </div>
        <div className="ml-auto flex items-center gap-3.5 pr-[18px]">
          <Svg size={15} vb="0 0 15 15">
            <path d="M0 5h3l4-4v13l-4-4H0z" fill="#f0f0f0" />
            <path d="M9 5q1.500 2.500 0 5M11.500 3q3.500 4.500 0 9" stroke="#f0f0f0" strokeWidth="1.200" />
          </Svg>
          <Svg size={14} vb="0 0 14 14">
            <path d="M4 2a6 6 0 1 0 6 0M7 0v7" stroke="#f0f0f0" strokeWidth="1.300" />
          </Svg>
        </div>
      </header>
      <div className="flex min-h-0 flex-1">
        <Dock />
        <div className="flex min-w-0 flex-1 flex-col">
          <div className="relative flex h-[37px] shrink-0 items-center justify-end gap-3 border-b border-[#bdbdbd] bg-[#ebebeb] pr-[7px]">
            <h1 className="absolute inset-x-0 pt-0.5 text-center font-bold">31_2.pptx - LibreOffice Impress</h1>
            <button type="button" aria-label="Minimize" className="relative flex size-[22px] items-center justify-center rounded-full bg-[#dadada]"><span className="mt-1 h-px w-2 bg-[#333]" /></button>
            <button type="button" aria-label="Restore" className="relative flex size-[22px] items-center justify-center rounded-full bg-[#dadada]">
              <Svg size={10} vb="0 0 10 10"><path d="M1.500 3.500h5v5h-5z" stroke="#333" strokeWidth="1.200" /><path d="M3.500 1.500h5v5" stroke="#888" /></Svg>
            </button>
            <button type="button" aria-label="Close" className="relative flex size-[22px] items-center justify-center rounded-full bg-[#dadada]"><Cross size={9} /></button>
          </div>
          <div className="flex h-[25px] shrink-0 items-center">
            <nav className="flex h-full flex-1 items-center gap-[17px] border-b border-[#dedede] pt-0.5 pl-2">
              {MENUS.map((m) => (
                <button key={m} type="button">{m}</button>
              ))}
            </nav>
            <button type="button" aria-label="Close document" className="flex w-6 justify-center pr-2"><Cross size={10} /></button>
          </div>
          <div className="shrink-0 pb-0.5 pl-0.5">
            <div className="-mt-px"><Toolbar label="Standard" items={ROW1} /></div>
            <div className="pl-px"><Toolbar label="Drawing" items={ROW2} /></div>
          </div>
          <div className="-mt-px flex min-h-0 flex-1">
            <SlidePanel />
            <Splitter dir="l" />
            <main className="flex min-w-0 flex-1 flex-col">
              <InfoBar text="Help us make LibreOffice even better!" action="Get involved" />
              <InfoBar text="Your donations support our worldwide community." action="Donate" />
              <Canvas />
            </main>
            <Splitter dir="r" />
            <Properties />
            <TabBar />
          </div>
          <StatusBar />
        </div>
      </div>
    </div>
  );
}
